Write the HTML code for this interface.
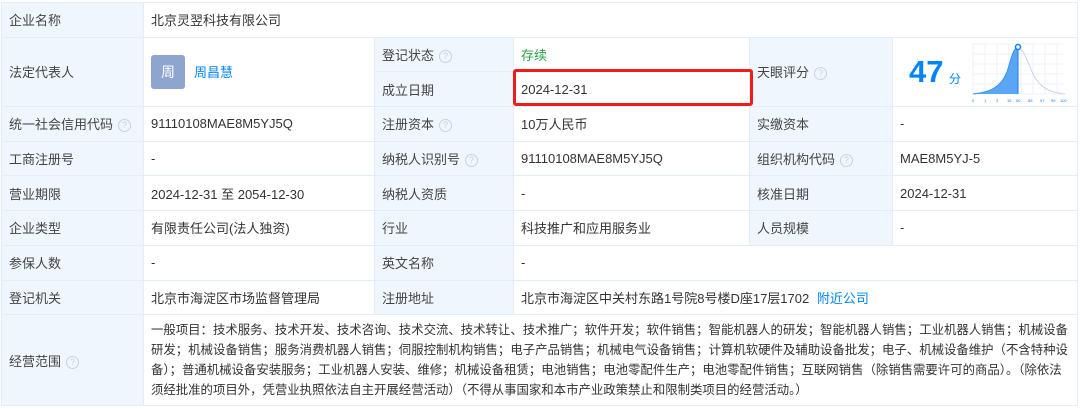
<!DOCTYPE html><html><head><meta charset="utf-8"><style>
body{margin:0;width:1080px;height:409px;background:#fff;font-family:"Liberation Sans","Noto Sans CJK SC",sans-serif;font-size:13px;color:#333;position:relative;overflow:hidden}
table{position:absolute;left:1px;top:2px;border-collapse:collapse;table-layout:fixed;width:1077px}
td{border:1px solid #e4ecf5;padding:0 0 0 7px;height:33.7px;vertical-align:middle;white-space:nowrap}
td.l{background:#f0f6fd;color:#444}
.q{display:inline-block;width:11px;height:11px;border:1px solid #c5d3e3;border-radius:50%;color:#c5d3e3;font-size:9px;line-height:11px;text-align:center;margin-left:5px;vertical-align:1px}
.scope{white-space:normal;line-height:20px;padding:5px 6px 5px 7px;height:auto;font-size:12.4px}
a{color:#0084ff;text-decoration:none}
.red{position:absolute;left:513px;top:69px;width:234px;height:31px;border:3px solid #f01c1c;border-radius:3px}
</style></head><body>
<table>
<colgroup><col style="width:142px"><col style="width:231px"><col style="width:139px"><col style="width:236px"><col style="width:143px"><col></colgroup>
<tr><td class="l">企业名称</td><td colspan="5">北京灵翌科技有限公司</td></tr>
<tr><td class="l" rowspan="2">法定代表人</td><td rowspan="2"><span style="display:inline-block;width:34px;height:34px;background:#8ea6cf;border-radius:3px;color:#fff;text-align:center;line-height:34px;font-size:14px;vertical-align:middle">周</span><a style="margin-left:9px;vertical-align:middle">周昌慧</a></td><td class="l">登记状态<span class="q">?</span></td><td style="color:#2ba245">存续</td><td class="l" rowspan="2">天眼评分<span class="q">?</span></td><td rowspan="2" style="position:relative;padding:0">
<span style="position:absolute;left:16px;top:16px;font-size:31px;font-weight:bold;color:#0084ff">47</span><span style="position:absolute;left:56px;top:32px;font-size:12px;color:#0084ff">分</span>
<svg style="position:absolute;left:78px;top:4px" width="98" height="62" viewBox="0 0 98 62">
<g stroke="#eef2f7" stroke-width="1"><path d="M2 2H94M2 12H94M2 22H94M2 32H94M2 42H94M2 52H94M2 2V52M14 2V52M26 2V52M38 2V52M50 2V52M62 2V52M74 2V52M86 2V52"/></g>
<path d="M2 52C20 50 30 45 36 30C40 18 42 6 47 5V52Z" fill="#5aa6f5"/>
<path d="M2 52C20 50 30 45 36 30C40 18 42 6 47 5C52 6 56 18 62 32C68 45 80 51 94 52" fill="none" stroke="#c9d6e6"/>
<path d="M2 52C20 50 30 45 36 30C40 18 42 6 47 5" fill="none" stroke="#2d8df0"/>
<line x1="47" y1="5" x2="47" y2="52" stroke="#1a7ef0"/><circle cx="47" cy="5" r="2.5" fill="#fff" stroke="#1a7ef0" stroke-width="1.5"/>
<text y="60" font-size="4" fill="#1a7ef0" font-family="Liberation Sans">
<tspan x="1">0</tspan><tspan x="13">1</tspan><tspan x="25">3</tspan><tspan x="36">15</tspan><tspan x="45">50</tspan><tspan x="57">85</tspan><tspan x="69">97</tspan><tspan x="80">99</tspan><tspan x="89">100</tspan></text></svg></td></tr>
<tr><td class="l">成立日期</td><td>2024-12-31</td></tr>
<tr><td class="l">统一社会信用代码<span class="q">?</span></td><td>91110108MAE8M5YJ5Q</td><td class="l">注册资本<span class="q">?</span></td><td>10万人民币</td><td class="l">实缴资本</td><td>-</td></tr>
<tr><td class="l">工商注册号</td><td>-</td><td class="l">纳税人识别号<span class="q">?</span></td><td>91110108MAE8M5YJ5Q</td><td class="l">组织机构代码<span class="q">?</span></td><td>MAE8M5YJ-5</td></tr>
<tr><td class="l">营业期限</td><td>2024-12-31 至 2054-12-30</td><td class="l">纳税人资质</td><td>-</td><td class="l">核准日期</td><td>2024-12-31</td></tr>
<tr><td class="l">企业类型</td><td>有限责任公司(法人独资)</td><td class="l">行业</td><td>科技推广和应用服务业</td><td class="l">人员规模</td><td>-</td></tr>
<tr><td class="l">参保人数</td><td>-</td><td class="l">英文名称</td><td colspan="3">-</td></tr>
<tr><td class="l">登记机关</td><td>北京市海淀区市场监督管理局</td><td class="l">注册地址</td><td colspan="3">北京市海淀区中关村东路1号院8号楼D座17层1702 <a style="margin-left:4px">附近公司</a></td></tr>
<tr><td class="l">经营范围<span class="q">?</span></td><td colspan="5" class="scope">一般项目：技术服务、技术开发、技术咨询、技术交流、技术转让、技术推广；软件开发；软件销售；智能机器人的研发；智能机器人销售；工业机器人销售；机械设备研发；机械设备销售；服务消费机器人销售；伺服控制机构销售；电子产品销售；机械电气设备销售；计算机软硬件及辅助设备批发；电子、机械设备维护（不含特种设备）；普通机械设备安装服务；工业机器人安装、维修；机械设备租赁；电池销售；电池零配件生产；电池零配件销售；互联网销售（除销售需要许可的商品）。（除依法须经批准的项目外，凭营业执照依法自主开展经营活动）（不得从事国家和本市产业政策禁止和限制类项目的经营活动。）</td></tr>
</table>
<div class="red"></div>
</body></html>
